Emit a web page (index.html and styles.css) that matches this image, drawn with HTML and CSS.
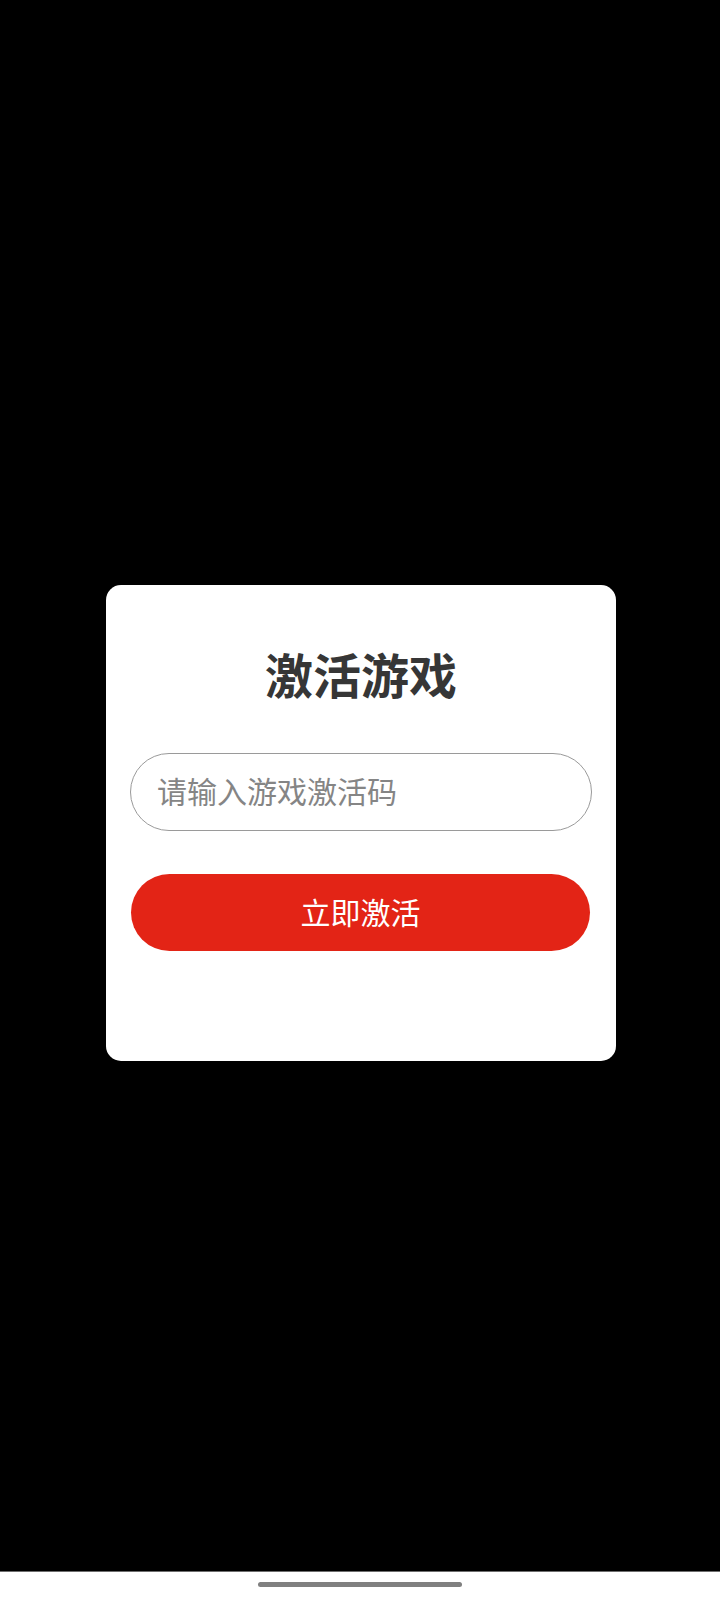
FILE: index.html
```html
<!DOCTYPE html>
<html lang="zh-CN">
<head>
<meta charset="utf-8">
<meta name="viewport" content="width=720">
<title>激活游戏</title>
<link rel="stylesheet" href="styles.css">
</head>
<body>
<main class="screen">
  <section class="card">
    <h1 class="title">激活游戏</h1>
    <div class="field">
      <input class="code-input" type="text" placeholder="请输入游戏激活码">
    </div>
    <button class="activate-btn" type="button">立即激活</button>
  </section>
</main>
<nav class="navbar">
  <div class="home-indicator"></div>
</nav>
</body>
</html>
```

FILE: styles.css
```css
* {
  box-sizing: border-box;
}

html, body {
  margin: 0;
  padding: 0;
}

body {
  width: 720px;
  height: 1600px;
  background: #000;
  font-family: "Noto Sans CJK SC", "Noto Sans", sans-serif;
  display: flex;
  flex-direction: column;
}

.screen {
  height: 1572px;
  padding-top: 585px;
  display: flex;
  flex-direction: column;
  align-items: flex-start;
  border-bottom: 1px solid #6e6e6e;
}

.card {
  margin-left: 106px;
  width: 510px;
  height: 476px;
  background: #fff;
  border-radius: 15px;
  padding: 58px 0 0 0;
  display: flex;
  flex-direction: column;
  align-items: flex-start;
}

.title {
  align-self: center;
  margin: 0;
  font-size: 48px;
  line-height: 60px;
  font-weight: 700;
  color: #363636;
}

.field {
  margin: 50px 0 0 24px;
  width: 462px;
  height: 78px;
}

.code-input {
  width: 100%;
  height: 100%;
  border: 1px solid #9a9a9a;
  border-radius: 39px;
  padding: 0 0 4px 26px;
  font-family: "Noto Sans CJK SC", "Noto Sans", sans-serif;
  font-size: 30px;
  color: #333;
  background: #fff;
  outline: none;
}

.code-input::placeholder {
  color: #858585;
}

.activate-btn {
  margin: 43px 0 0 25px;
  width: 459px;
  height: 77px;
  border: none;
  border-radius: 39px;
  background: #e32416;
  color: #fff;
  font-family: "Noto Sans CJK SC", "Noto Sans", sans-serif;
  font-size: 30px;
  padding: 0 0 4px 0;
  cursor: pointer;
}

.navbar {
  flex: 1;
  background: #fff;
  display: flex;
  justify-content: center;
  padding-top: 10px;
}

.home-indicator {
  width: 204px;
  height: 5px;
  border-radius: 3px;
  background: #808080;
}
```
